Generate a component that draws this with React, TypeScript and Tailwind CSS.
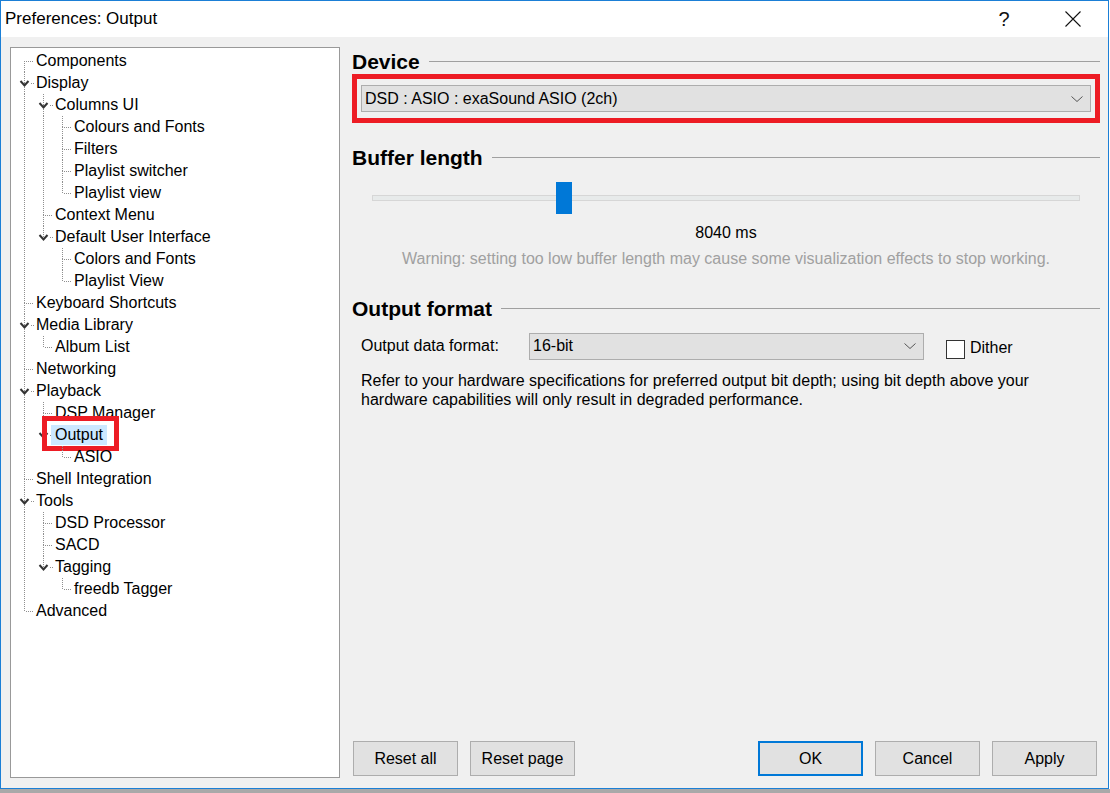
import React from 'react'

type Node = {
  label: string
  depth: number
  open?: boolean
  selected?: boolean
}

const rows: Node[] = [
  { label: 'Components', depth: 0 },
  { label: 'Display', depth: 0, open: true },
  { label: 'Columns UI', depth: 1, open: true },
  { label: 'Colours and Fonts', depth: 2 },
  { label: 'Filters', depth: 2 },
  { label: 'Playlist switcher', depth: 2 },
  { label: 'Playlist view', depth: 2 },
  { label: 'Context Menu', depth: 1 },
  { label: 'Default User Interface', depth: 1, open: true },
  { label: 'Colors and Fonts', depth: 2 },
  { label: 'Playlist View', depth: 2 },
  { label: 'Keyboard Shortcuts', depth: 0 },
  { label: 'Media Library', depth: 0, open: true },
  { label: 'Album List', depth: 1 },
  { label: 'Networking', depth: 0 },
  { label: 'Playback', depth: 0, open: true },
  { label: 'DSP Manager', depth: 1 },
  { label: 'Output', depth: 1, open: true, selected: true },
  { label: 'ASIO', depth: 2 },
  { label: 'Shell Integration', depth: 0 },
  { label: 'Tools', depth: 0, open: true },
  { label: 'DSD Processor', depth: 1 },
  { label: 'SACD', depth: 1 },
  { label: 'Tagging', depth: 1, open: true },
  { label: 'freedb Tagger', depth: 2 },
  { label: 'Advanced', depth: 0 },
]

const INDENT = 19
const ROW = 22
const DOT = '#8f8f8f'

function hasNext(i: number) {
  const d = rows[i].depth
  for (let j = i + 1; j < rows.length; j++) {
    if (rows[j].depth < d) return false
    if (rows[j].depth === d) return true
  }
  return false
}

function ancestorHasNext(i: number, d: number) {
  for (let k = i - 1; k >= 0; k--) {
    if (rows[k].depth === d) return hasNext(k)
  }
  return false
}

function TreeLines({ i }: { i: number }) {
  const node = rows[i]
  const w = INDENT * (node.depth + 1)
  const cx = INDENT * node.depth + 9.5
  const lines: React.ReactNode[] = []
  for (let d = 0; d < node.depth; d++) {
    if (ancestorHasNext(i, d)) {
      const x = INDENT * d + 9.5
      lines.push(<line key={`v${d}`} x1={x} y1={0} x2={x} y2={ROW} />)
    }
  }
  if (i !== 0) lines.push(<line key="top" x1={cx} y1={0} x2={cx} y2={11} />)
  if (hasNext(i)) lines.push(<line key="bot" x1={cx} y1={11} x2={cx} y2={ROW} />)
  lines.push(<line key="h" x1={node.open ? cx + 6 : cx + 1} y1={11.5} x2={w} y2={11.5} />)

  return (
    <svg width={w} height={ROW} className="shrink-0">
      <g stroke={DOT} strokeWidth={1} strokeDasharray="1 1" shapeRendering="crispEdges">
        {lines}
      </g>
      {node.open && (
        <polyline
          points={`${cx - 4},${9} ${cx},${13.5} ${cx + 4},${9}`}
          fill="none"
          stroke="#333"
          strokeWidth={2}
        />
      )}
    </svg>
  )
}

function Chevron({ className }: { className?: string }) {
  return (
    <svg width="12" height="6" viewBox="0 0 12 6" className={className}>
      <polyline points="0.5,0.5 6,5.5 11.5,0.5" fill="none" stroke="#555" strokeWidth="1" />
    </svg>
  )
}

function Heading({ title }: { title: string }) {
  return (
    <div className="flex items-center h-[25px]">
      <span className="text-[21px] leading-[25px] font-bold text-black">{title}</span>
      <div className="flex-1 h-px bg-[#a0a0a0] ml-[9px]" />
    </div>
  )
}

function Button({ label, primary }: { label: string; primary?: boolean }) {
  return (
    <button
      type="button"
      className={
        primary
          ? 'w-[105px] h-[35px] bg-[#e1e1e1] border-2 border-[#0078d7] text-[16px] text-black'
          : 'w-[105px] h-[35px] bg-[#e1e1e1] border border-[#adadad] text-[16px] text-black'
      }
    >
      {label}
    </button>
  )
}

export default function App() {
  return (
    <div
      className="w-[1110px] h-[793px] bg-white flex flex-col overflow-hidden"
      style={{ fontFamily: '"Liberation Sans", Arial, sans-serif' }}
    >
      <div className="w-[1109px] h-[789px] border border-[#1b7fd6] bg-[#f0f0f0] flex flex-col">
        {/* title bar */}
        <div className="h-[36px] bg-white flex items-center pl-[4px]">
          <span className="text-[17px] text-black">Preferences: Output</span>
          <div className="ml-auto flex items-center gap-[23px] mr-[12px]">
            <div className="w-[46px] flex justify-center text-[20px] font-light text-[#111]">?</div>
            <div className="w-[46px] flex justify-center">
              <svg width="16" height="16" viewBox="0 0 16 16">
                <path d="M0.5 0.5 L15.5 15.5 M15.5 0.5 L0.5 15.5" stroke="#111" strokeWidth="1.1" fill="none" />
              </svg>
            </div>
          </div>
        </div>

        {/* body */}
        <div className="flex-1 flex pl-[9px] pr-[8px] pt-[10px] pb-[10px]">
          {/* tree */}
          <div className="w-[330px] h-[731px] bg-white border border-[#999] pt-[2px] pl-[4px] shrink-0">
            {rows.map((node, i) => (
              <div key={node.label + i} className="relative flex items-center h-[22px]">
                <TreeLines i={i} />
                <span
                  className={
                    node.selected
                      ? 'ml-[-2px] pl-[4px] pr-[4px] h-[20px] leading-[20px] text-[16px] text-black bg-[#cce8ff] whitespace-nowrap'
                      : 'ml-[-2px] pl-[4px] pr-[4px] h-[20px] leading-[20px] text-[16px] text-black whitespace-nowrap'
                  }
                >
                  {node.label}
                </span>
                {node.selected && (
                  <div className="absolute left-[27px] top-[-8px] w-[77px] h-[35px] border-[5px] border-[#ed1c24]" />
                )}
              </div>
            ))}
          </div>

          {/* settings page */}
          <div className="flex-1 ml-[12px] flex flex-col pt-[2px] pb-[2px]">
            <Heading title="Device" />
            <div className="border-[5px] border-[#ed1c24] px-[4px] py-[6px]">
              <div className="h-[27px] bg-[#e1e1e1] border border-[#adadad] flex items-center pl-[3px] pr-[7px]">
                <span className="text-[16px] text-black">DSD : ASIO : exaSound ASIO (2ch)</span>
                <Chevron className="ml-auto" />
              </div>
            </div>

            <div className="mt-[22px]">
              <Heading title="Buffer length" />
            </div>

            <div className="mt-[12px] mx-[20px] h-[32px] flex items-center relative">
              <div className="w-full h-[6px] bg-[#e7eaea] border border-[#d6d6d6]" />
              <div className="absolute left-[184px] top-0 w-[16px] h-[32px] bg-[#0078d7]" />
            </div>

            <div className="mt-[9px] text-center text-[16px] leading-[20px] text-black">8040 ms</div>
            <div className="mt-[6px] text-center text-[16px] leading-[20px] text-[#a0a0a0]">
              Warning: setting too low buffer length may cause some visualization effects to stop working.
            </div>

            <div className="mt-[27px]">
              <Heading title="Output format" />
            </div>

            <div className="mt-[11px] flex items-center pl-[9px]">
              <span className="w-[168px] text-[16px] text-black">Output data format:</span>
              <div className="w-[395px] h-[27px] bg-[#e1e1e1] border border-[#adadad] flex items-center pl-[3px] pr-[7px]">
                <span className="text-[16px] text-black">16-bit</span>
                <Chevron className="ml-auto" />
              </div>
              <div className="ml-[22px] w-[19px] h-[19px] bg-white border border-[#333] mt-[6px]" />
              <span className="ml-[5px] mt-[4px] text-[16px] text-black">Dither</span>
            </div>

            <p className="mt-[11px] pl-[9px] text-[16px] leading-[19px] text-black">
              Refer to your hardware specifications for preferred output bit depth; using bit depth above your
              <br />
              hardware capabilities will only result in degraded performance.
            </p>

            <div className="mt-auto flex items-center pl-px pr-[3px]">
              <div className="flex gap-[12px]">
                <Button label="Reset all" />
                <Button label="Reset page" />
              </div>
              <div className="ml-auto flex gap-[12px]">
                <Button label="OK" primary />
                <Button label="Cancel" />
                <Button label="Apply" />
              </div>
            </div>
          </div>
        </div>
      </div>
      <div className="h-[4px] w-full bg-[#a9a9a9]" />
    </div>
  )
}
